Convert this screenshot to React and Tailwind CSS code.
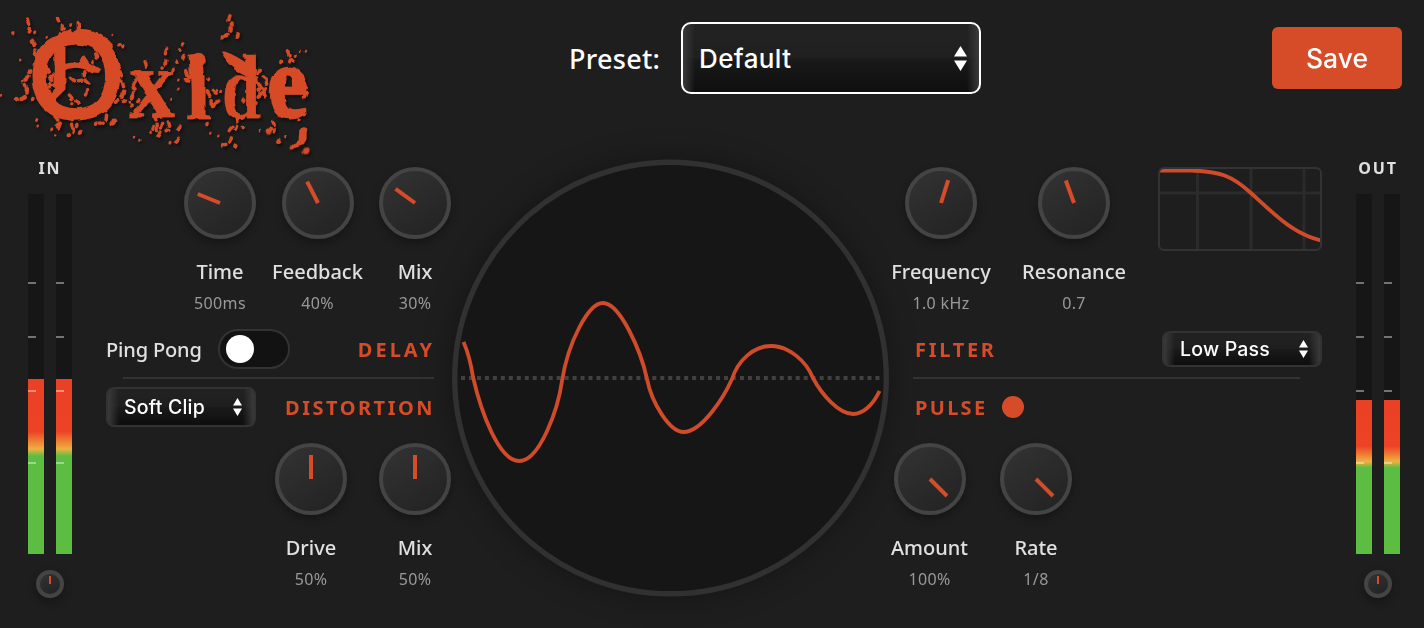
import React from "react";

const SPOTS = [
  [40, 98, 4], [104, 97, 5], [140, 112, 4], [58, 180, 4], [337, 105, 3], [357, 136, 6], [368, 139, 6],
  [3, 286, 4], [50, 297, 6], [75, 290, 5], [110, 357, 5], [113, 378, 4], [152, 388, 5], [166, 408, 4],
  [240, 397, 7], [340, 366, 9], [287, 371, 6], [405, 411, 4], [421, 421, 4], [712, 108, 8], [667, 112, 6],
  [695, 72, 7], [864, 153, 6], [902, 153, 3], [918, 154, 4], [886, 168, 5], [842, 187, 5], [835, 424, 7],
  [857, 412, 5], [897, 360, 5], [914, 344, 4], [780, 394, 4], [631, 400, 4], [655, 408, 4], [621, 372, 6],
  [706, 439, 7], [667, 434, 5], [730, 381, 6], [510, 428, 5], [535, 240, 4], [535, 267, 4], [511, 298, 4],
  [418, 302, 7], [395, 318, 7], [372, 302, 7], [400, 260, 6], [640, 316, 8], [650, 270, 5], [662, 272, 5],
  [626, 238, 5], [548, 133, 6], [538, 150, 5], [528, 188, 6], [519, 210, 6], [551, 170, 8], [917, 452, 9],
  [875, 441, 7], [805, 397, 6], [920, 258, 5], [918, 280, 6], [776, 270, 7], [775, 290, 6], [768, 310, 5],
  [88, 215, 7], [68, 245, 5], [98, 300, 6], [310, 330, 7], [60, 298, 5], [212, 75, 5], [192, 88, 6],
  [395, 290, 8], [437, 310, 5], [480, 258, 6], [602, 195, 8], [560, 240, 7], [230, 375, 6], [180, 372, 6],
  [205, 405, 6], [460, 382, 7], [450, 398, 6], [800, 250, 7], [795, 270, 8], [730, 300, 7], [690, 325, 6],
];

const DRIPS = [
  "M82 57q8 22 5 34q-2 8-10 9", "M172 52q6 22 10 22M187 78q2 16-10 25", "M235 70v20", "M97 124q12 20 6 40",
  "M84 228q-14 20-6 30M82 266q2 20-18 30", "M64 298l12-5", "M360 215q8 16 2 28M368 250q10 30-8 45q-6 8-14 12",
  "M690 47q-6 14-2 22M690 83q4 18-14 26", "M862 152q10 18 4 30M868 177l14 8", "M435 185q8 20 4 22",
  "M500 145q-8 20-1 24M498 180q-2 14-12 24", "M165 350q20 20 10 34M180 370q-12 6-16 14", "M220 345q-8 26-4 34M220 384q2 18-12 20",
  "M312 320q14 28 2 46q-8 8-22 6", "M462 350q14 24 8 44M488 370q-8 30-16 40", "M505 365q10 24-4 30M540 378q-10 12-8 20M536 415q-8 14-22 12",
  "M708 352q6 24-2 36M696 382q-16 14-4 20M694 414q-2 18-22 20", "M818 364q10 16 2 32M812 386q-6 10-14 8",
  "M290 135q-8 20 0 34q-2 12-12 16M300 150l6 20",
  "M140 205q12 28 22 44M160 225l-12 38M210 235q16 14 40 8M255 215q-8 20 12 34M208 285q14 12 10 26M260 272q-2 18-14 20",
  "M230 300q12 10 4 20M165 255q-12 4-18 0", "M408 240q-14 20-6 30M398 280q-12 20-10 26", "M560 212l6 20M556 236l14 10",
  "M640 270l20 18M645 310l20-12", "M778 208q-12 20-6 40M790 230l18 16M780 282q12-8 26-4", "M780 262l26 6M776 252l22 40",
  "M915 250q8 30-8 50", "M470 350l26-6", "M622 275q16 20 10 44",
];

function Logo() {
  return (
    <svg className="block h-40 w-[320px] shrink-0 overflow-visible" viewBox="0 0 960 480" role="img">
      <defs>
        <filter id="rust" x="-5%" y="-10%" width="110%" height="120%">
          <feTurbulence type="fractalNoise" baseFrequency="0.035" numOctaves="1" seed="4" result="noise" />
          <feDisplacementMap in="SourceGraphic" in2="noise" scale="13" xChannelSelector="R" yChannelSelector="G" result="rough" />
          <feDropShadow in="rough" dx="5" dy="7" stdDeviation="4" floodColor="#000" floodOpacity="0.55" />
        </filter>
      </defs>
      <g filter="url(#rust)" fill="#d64c28" stroke="#d64c28">
        <text strokeWidth="1" strokeLinejoin="round" fontWeight="700" fontFamily="'Liberation Serif', serif">
          <tspan x="82" y="353" fontSize="362" fontWeight="400" strokeWidth="9" fontFamily="'Liberation Sans', sans-serif" textLength="292" lengthAdjust="spacingAndGlyphs">O</tspan>
          <tspan x="388" y="350" fontSize="300" textLength="138" lengthAdjust="spacingAndGlyphs">x</tspan>
          <tspan x="556" y="356" fontSize="286" textLength="78" lengthAdjust="spacingAndGlyphs">i</tspan>
          <tspan x="666" y="354" fontSize="272" textLength="114" lengthAdjust="spacingAndGlyphs">d</tspan>
          <tspan x="804" y="352" fontSize="312" strokeWidth="8" textLength="118" lengthAdjust="spacingAndGlyphs">e</tspan>
        </text>
        <path stroke="none" d="M104 162L180 104L212 86L230 110L196 132V268L158 306L146 298L164 262Q166 210 162 156L132 190L104 186ZM190 190Q220 182 240 186Q246 172 252 165L268 188L301 208L294 221Q276 224 262 210Q220 196 190 212ZM663 155Q690 152 766 208L750 232Q690 208 663 155ZM566 164Q600 156 606 176L612 232L570 236ZM574 232H598V320L580 340Z" />
        <g fill="none" strokeWidth="10" strokeLinecap="round" strokeLinejoin="round" strokeDasharray="13 14">
          {DRIPS.map((d) => <path key={d} d={d} />)}
        </g>
        <path fill="none" strokeWidth="24" strokeLinecap="round" d="M236 99Q290 96 326 138" />
        <path stroke="none" d="M898 390Q908 376 922 386Q918 404 920 412Q914 436 902 438L872 448Q866 436 880 434Q900 426 896 410Z" />
        <g stroke="none">
          {SPOTS.map(([x, y, r]) => <ellipse key={`${x}-${y}`} cx={x} cy={y} rx={r * 0.85} ry={r * 1.15} transform={`rotate(25 ${x} ${y})`} />)}
        </g>
      </g>
    </svg>
  );
}

function Knob({ angle }) {
  return (
    <div className="flex h-[72px] w-[72px] shrink-0 justify-center rounded-full border-4 border-[#444] bg-linear-145 from-[#333] to-[#222] pt-2 shadow-[0_4px_8px_rgba(0,0,0,0.3)]">
      <div className="h-6 w-1 origin-bottom bg-[#d64c28]" style={{ transform: `rotate(${angle}deg)` }} />
    </div>
  );
}

function Control({ label, value, angle, width = "w-[72px]" }) {
  return (
    <div className={`flex ${width} flex-col items-center whitespace-nowrap`}>
      <Knob angle={angle} />
      <div className="mt-[21px] text-[20px] leading-6 font-medium text-[#e0e0e0]">{label}</div>
      <div className="mt-[9px] text-[16px] leading-5 tracking-[0.35px] text-[#999]">{value}</div>
    </div>
  );
}

function Arrows({ className }) {
  return (
    <svg className={className} viewBox="0 0 10 18" preserveAspectRatio="none" fill="#fff">
      <path d="M5 0L10 7.6H0ZM0 10.4H10L5 18Z" />
    </svg>
  );
}

function Select({ label, size }) {
  return (
    <div className={`flex ${size} items-center justify-between rounded-lg border-2 border-[#333] bg-[linear-gradient(90deg,#3a3a3a_0,transparent_11px,transparent_calc(100%-11px),#3a3a3a_100%),linear-gradient(#222_0%,#1e1e1e_50%,#1a1a1a_51%,#0e0e0e_100%)] pr-3 pl-4 font-['Inter',sans-serif] text-[19.5px] font-medium tracking-[0.2px] text-white`}>
      <span className="pt-0.5">{label}</span>
      <Arrows className="h-[18px] w-[9px]" />
    </div>
  );
}

function Meter({ label, level }) {
  return (
    <div className="flex w-11 shrink-0 flex-col items-center">
      <div className="mt-[8px] h-5 text-[16px] leading-5 font-bold tracking-[1.9px] text-[#e0e0e0]">{label}</div>
      <div className="mt-4 flex gap-3">
        {[0, 1].map((i) => (
          <div key={i} className="relative flex h-[360px] w-4 flex-col justify-end bg-[#161616]">
            <div className="bg-[linear-gradient(to_top,#5dbd42_0%,#5dbd42_56%,#f0b040_60%,#ec4326_70%,#ea4025_100%)]" style={{ height: level }} />
            <div className="absolute top-[88px] left-0 h-0.5 w-2 bg-white/40" />
            <div className="absolute top-[142px] left-0 h-0.5 w-2 bg-white/40" />
            <div className="absolute top-[196px] left-0 h-0.5 w-2 bg-white/40" />
            <div className="absolute top-[268px] left-0 h-0.5 w-2 bg-white/40" />
          </div>
        ))}
      </div>
      <div className="mt-4 flex h-7 w-7 justify-center rounded-full border-4 border-[#444] bg-linear-145 from-[#333] to-[#222] pt-0.5 shadow-[0_4px_8px_rgba(0,0,0,0.3)]">
        <div className="h-2 w-0.5 bg-[#d64c28]" />
      </div>
    </div>
  );
}

function Scope() {
  return (
    <div className="mt-[10px] ml-px h-[436px] w-[436px] shrink-0 rounded-full bg-[#161616] shadow-[0_0_30px_rgba(0,0,0,0.35)]">
      <svg className="block h-full w-full overflow-visible" viewBox="452 160 436 436" fill="none">
        <circle cx="670.5" cy="378" r="215.8" stroke="#313131" strokeWidth="5.4" />
        <path d="M461 378H881" stroke="#404040" strokeWidth="4" strokeDasharray="4 3.97" />
        <path
          d="M463.5 342C468 352 471 364 473 377C481 412 499 461 519 461C540 461 558 409 562 381C568 343 588 303 603 303C620 303 641 351 647 379C652 404 670 432 683.500 432C702 432 724 397 732 379C738 360 754 346 771 346C789 346 806 361 813 378C822 395 839 414 853 414C863 414 873 405 879.5 391"
          stroke="#d04b29"
          strokeWidth="3.8"
        />
      </svg>
    </div>
  );
}

function FilterGraph() {
  return (
    <div className="ml-px h-[84px] w-[164px] overflow-hidden rounded-md border-2 border-[#333]">
      <svg className="block h-full w-full" viewBox="1160 169 160 80" fill="none">
        <path d="M1197.500 169V249M1251 169V249M1304 169V249M1160 193H1320" stroke="#fff" strokeOpacity="0.06" strokeWidth="3" />
        <path d="M1160 170.500H1190C1220 171 1232 176 1251 193C1275 215 1292 233 1321 240.500" stroke="#d04b29" strokeWidth="3.8" />
      </svg>
    </div>
  );
}

function Title({ children, tracking = "tracking-[2.5px]" }) {
  return <h2 className={`pt-0.5 text-[20px] leading-7 font-bold ${tracking} text-[#d64c28]`}>{children}</h2>;
}

export default function App() {
  return (
    <div className="h-[628px] w-[1424px] overflow-hidden bg-[#1e1e1e] font-['Noto_Sans',sans-serif]">
      <header className="flex h-[150px] items-start">
        <Logo />
        <div className="mt-[22px] ml-[249px] flex items-center text-white">
          <span className="w-[112px] pt-0.5 text-[27px] font-medium tracking-[0.3px]">Preset:</span>
          <div className="flex h-[72px] w-[300px] items-center justify-between rounded-[10px] border-2 border-white bg-[linear-gradient(90deg,#3a3a3a_0,transparent_12px,transparent_calc(100%-12px),#3a3a3a_100%),linear-gradient(#232323_0%,#1f1f1f_50%,#1a1a1a_51%,#0e0e0e_100%)] pr-3 pl-4 font-['Inter',sans-serif] text-[26px] font-medium tracking-[0.4px]">
            <span>Default</span>
            <Arrows className="h-[25px] w-[13px]" />
          </div>
        </div>
        <button className="mt-[27px] ml-[291px] h-[62px] w-[130px] rounded-md bg-[#d64c28] pt-0.5 font-['Inter',sans-serif] text-[26.5px] font-medium text-white">Save</button>
      </header>

      <main className="flex h-[478px] items-start pl-7">
        <Meter label="IN" level={175} />

        <div className="ml-[34px] w-[345px] shrink-0 pt-[17px]">
          <div className="flex justify-end gap-4">
            <Control label="Time" value="500ms" angle={-68} />
            <Control label="Feedback" value="40%" angle={-27} width="w-[91px]" />
            <Control label="Mix" value="30%" angle={-54} />
          </div>
          <div className="mt-4 flex h-10 items-center pr-4">
            <span className="w-28 pt-0.5 text-[20px] font-medium tracking-[-0.15px] whitespace-nowrap text-[#e0e0e0]">Ping Pong</span>
            <div className="flex h-10 w-[72px] items-center rounded-full border-2 border-[#333] bg-[#121212] pl-1.5">
              <div className="h-7 w-7 rounded-full bg-white" />
            </div>
            <div className="ml-auto"><Title tracking="tracking-[3px]">DELAY</Title></div>
          </div>
          <div className="mt-2 ml-[17px] h-0.5 w-[311px] bg-[#333]" />
          <div className="mt-2 flex h-10 items-center justify-between pr-4">
            <Select label="Soft Clip" size="h-10 w-[150px]" />
            <Title>DISTORTION</Title>
          </div>
          <div className="mt-4 flex justify-end gap-8">
            <Control label="Drive" value="50%" angle={0} />
            <Control label="Mix" value="50%" angle={0} />
          </div>
        </div>

        <Scope />

        <div className="ml-[3px] w-[431px] shrink-0 pt-[17px]">
          <div className="flex gap-8">
            <Control label="Frequency" value="1.0 kHz" angle={17.5} width="w-[100px]" />
            <Control label="Resonance" value="0.7" angle={-20} width="w-[102px]" />
            <FilterGraph />
          </div>
          <div className="mt-4 flex h-10 items-center justify-between pl-6">
            <Title tracking="tracking-[2.7px]">FILTER</Title>
            <Select label="Low Pass" size="h-9 w-[160px]" />
          </div>
          <div className="mt-2 ml-[22px] h-0.5 w-[387px] bg-[#333]" />
          <div className="mt-2 flex h-10 items-center gap-[15px] pl-6">
            <Title tracking="tracking-[2.3px]">PULSE</Title>
            <div className="h-[22px] w-[22px] rounded-full bg-[#d64c28]" />
          </div>
          <div className="mt-4 flex gap-8">
            <Control label="Amount" value="100%" angle={135} width="w-[77px]" />
            <Control label="Rate" value="1/8" angle={135} />
          </div>
        </div>

        <div className="ml-[34px]"><Meter label="OUT" level={154} /></div>
      </main>
    </div>
  );
}
